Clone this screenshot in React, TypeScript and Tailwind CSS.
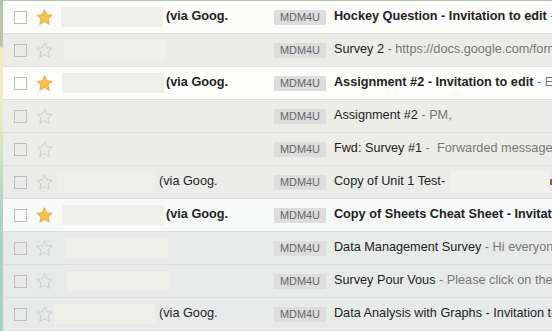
import React from "react";

interface Mail {
  unread: boolean;
  starred: boolean;
  rowBg: string;
  box?: { left: number; width: number; bg: string };
  via?: number;
  subject: string;
  snippet?: string;
  redactTail?: boolean;
}

const MAILS: Mail[] = [
  {
    unread: true,
    starred: true,
    rowBg: "bg-[#fbfbfa]",
    box: { left: 7, width: 102, bg: "bg-[#efefec]" },
    via: 3,
    subject: "Hockey Question - Invitation to edit",
    snippet: " - Editing",
  },
  {
    unread: false,
    starred: false,
    rowBg: "bg-[#ebebe8]",
    box: { left: 10, width: 102, bg: "bg-[#efefeb]" },
    subject: "Survey 2",
    snippet: " - https://docs.google.com/forms/d/",
  },
  {
    unread: true,
    starred: true,
    rowBg: "bg-[#fdfdfb]",
    box: { left: 8, width: 102, bg: "bg-[#efefec]" },
    via: 2,
    subject: "Assignment #2 - Invitation to edit",
    snippet: " - Editing",
  },
  {
    unread: false,
    starred: false,
    rowBg: "bg-[#ecece9]",
    subject: "Assignment #2",
    snippet: " - PM,",
  },
  {
    unread: false,
    starred: false,
    rowBg: "bg-[#ecece9]",
    subject: "Fwd: Survey #1",
    snippet: " -  Forwarded message ----------",
  },
  {
    unread: false,
    starred: false,
    rowBg: "bg-[#ebecea]",
    box: { left: 3, width: 98, bg: "bg-[#eeeeeb]" },
    via: 4,
    subject: "Copy of Unit 1 Test-",
    redactTail: true,
  },
  {
    unread: true,
    starred: true,
    rowBg: "bg-[#f8f9f9]",
    box: { left: 8, width: 102, bg: "bg-[#efefec]" },
    via: 2,
    subject: "Copy of Sheets Cheat Sheet - Invitation to edit",
  },
  {
    unread: false,
    starred: false,
    rowBg: "bg-[#e7eae9]",
    box: { left: 12, width: 102, bg: "bg-[#efefe9]" },
    subject: "Data Management Survey",
    snippet: " - Hi everyone,",
  },
  {
    unread: false,
    starred: false,
    rowBg: "bg-[#e7eae9]",
    box: { left: 13, width: 102, bg: "bg-[#efefe9]" },
    subject: "Survey Pour Vous",
    snippet: " - Please click on the link",
  },
  {
    unread: false,
    starred: false,
    rowBg: "bg-[#e7eae9]",
    box: { left: 0, width: 101, bg: "bg-[#efefea]" },
    via: 4,
    subject: "Data Analysis with Graphs - Invitation to edit",
  },
];

function Star({ on }: { on: boolean }) {
  return (
    <svg width="17" height="16" viewBox="0 0 24 23" className="shrink-0">
      <polygon
        points="12,1 15.1,8.4 23,9 17,14.2 18.8,22 12,17.8 5.2,22 7,14.2 1,9 8.9,8.4"
        fill={on ? "#f7c24c" : "none"}
        stroke={on ? "#e3a93c" : "#c9c9c9"}
        strokeWidth="1.3"
        strokeLinejoin="round"
      />
    </svg>
  );
}

function Row({ mail }: { mail: Mail }) {
  const weight = mail.unread ? "font-bold" : "font-normal";
  return (
    <div
      className={`flex h-[33px] items-center border-b border-[#dedede] ${mail.rowBg} whitespace-nowrap`}
    >
      <div className="ml-[11px] h-[13px] w-[13px] shrink-0 border border-[#bdbdbd]" />
      <div className="ml-[9px]">
        <Star on={mail.starred} />
      </div>
      <div className="ml-[1px] flex w-[212px] shrink-0 items-center overflow-hidden">
        {mail.box && (
          <div
            className={`h-[20px] shrink-0 ${mail.box.bg}`}
            style={{ marginLeft: mail.box.left, width: mail.box.width }}
          />
        )}
        {mail.via !== undefined && (
          <span className={`text-[#222] ${weight}`} style={{ marginLeft: mail.via }}>
            (via Goog.
          </span>
        )}
      </div>
      <span className="ml-[8px] flex h-[15px] shrink-0 items-center bg-[#dddddd] px-[6px] text-[10.9px] text-[#666]">
        MDM4U
      </span>
      <div className="ml-[8px] whitespace-pre">
        <span className={`text-[#222] ${weight}`}>{mail.subject}</span>
        {mail.snippet && <span className="text-[#777]">{mail.snippet}</span>}
        {mail.redactTail && (
          <>
            <span className="ml-[5px] inline-block h-[22px] w-[99px] bg-[#f1f1ec] align-middle" />
            <span className="ml-[1px] inline-block h-[6px] w-[3px] bg-[#a4532e] align-middle" />
          </>
        )}
      </div>
    </div>
  );
}

export default function App() {
  return (
    <div className="h-[331px] w-[552px] overflow-hidden bg-[#b9c5b1] font-['Liberation_Sans',Arial,sans-serif] text-[12.7px]">
      <div className="flex h-full pt-px">
        <div className="w-[3px] shrink-0 bg-[linear-gradient(to_bottom,#b9c5b1_0px,#b9c5b1_44px,#f2eebb_48px,#eeedc0_110px,#c5dcc6_170px,#a9d3c7_215px,#a8d2c6_331px)]" />
        <div className="min-w-0 flex-1 overflow-hidden">
          {MAILS.map((m, i) => (
            <Row key={i} mail={m} />
          ))}
        </div>
      </div>
    </div>
  );
}
